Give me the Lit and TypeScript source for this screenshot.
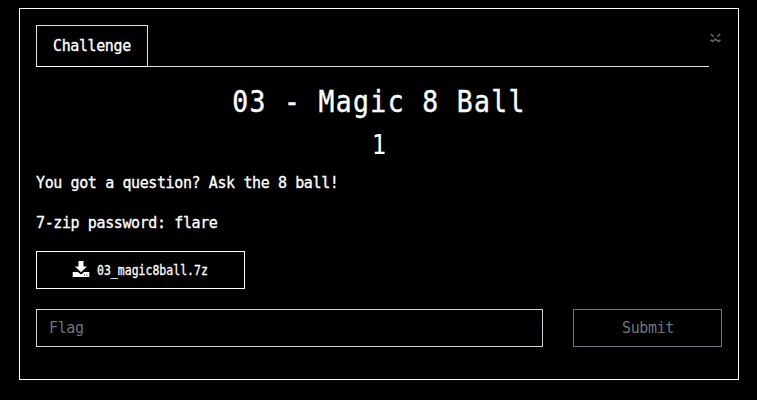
import { LitElement, html, css } from "lit";
import { customElement } from "lit/decorators.js";

@customElement("app-root")
export class AppRoot extends LitElement {
  static styles = css`
    * { box-sizing: border-box; margin: 0; }
    :host {
      display: block; height: 400px; padding: 8px 18px 20px 19px; overflow: hidden;
      background: #000; color: #fff; box-sizing: border-box;
      font: 15px/24px "DejaVu Sans Mono", monospace; letter-spacing: -0.39px;
    }
    .card { height: 372px; border: 1px solid #fff; padding: 16px; }
    .top { display: flex; align-items: flex-start; height: 42px; }
    .tabs { flex: 1; display: flex; height: 42px; border-bottom: 1px solid #dee2e6; }
    .tab {
      width: 112px; height: 42px; border: 1px solid #dee2e6; border-bottom-color: #fff;
      padding: 8px 0 0 16px; -webkit-text-stroke: 0.3px #fff;
    }
    .close {
      width: 13px; height: 19px; padding: 8px 0 0 1px; border: 0; background: none;
      display: block; line-height: 0;
    }
    h3, h4 { text-align: center; font-weight: 400; transform: scaleX(0.88); }
    h3 { margin-top: 16px; font-size: 30px; line-height: 38px; letter-spacing: 1.57px; -webkit-text-stroke: 0.4px #fff; }
    h4 { margin-top: 9px; font-size: 27px; line-height: 30px; letter-spacing: 0; }
    .desc { margin-top: 11px; -webkit-text-stroke: 0.3px #fff; }
    .desc p { margin-bottom: 16px; }
    .download {
      width: 209px; height: 38px; border: 1px solid #fff; color: #fff;
      display: flex; align-items: center; padding-left: 35px; text-decoration: none;
    }
    .download svg { flex: none; margin: 0 7px 2px 0; }
    .file {
      font-size: 14px; letter-spacing: 0; transform: scaleX(0.822); transform-origin: left;
      white-space: nowrap; -webkit-text-stroke: 0.3px #fff;
    }
    .form { display: flex; gap: 30px; margin-top: 20px; }
    input, .submit { height: 38px; background: transparent; font: inherit; letter-spacing: inherit; border-radius: 0; }
    input { width: 507px; border: 1px solid #ced4da; padding: 0 12px; color: #fff; outline: 0; }
    input::placeholder { color: #6c757d; opacity: 1; }
    .submit { width: 149px; border: 1px solid #6c757d; color: #6c757d; padding: 0 0 0 1px; }
  `;

  render() {
    return html`
      <main class="card">
        <div class="top">
          <nav class="tabs"><div class="tab">Challenge</div></nav>
          <button class="close" aria-label="Close">
            <svg width="12" height="11" viewBox="0 0 12 11" fill="none" stroke="#666" stroke-width="1.6">
              <path d="M.8 1 3.6 3.6M10.2 1 7.4 3.6M.5 6.8 2.5 8.4 5.5 6.2 8.5 8.4 10.5 6.8" />
            </svg>
          </button>
        </div>
        <h3>03 - Magic 8 Ball</h3>
        <h4>1</h4>
        <div class="desc">
          <p>You got a question? Ask the 8 ball!</p>
          <p>7-zip password: flare</p>
        </div>
        <a class="download">
          <svg width="18" height="16" viewBox="0 0 18 16" fill="#fff">
            <path d="M6.5 0h5v5.5H15L9 11.3 3 5.5h3.5z" />
            <path d="M.7 11h5.1L9 13.4 12.2 11h5.1v5H.7zM12 13.5v1h1v-1zM14.4 13.5v1h1v-1z" fill-rule="evenodd" />
          </svg>
          <span class="file">03_magic8ball.7z</span>
        </a>
        <div class="form">
          <input placeholder="Flag" />
          <button class="submit">Submit</button>
        </div>
      </main>
    `;
  }
}
